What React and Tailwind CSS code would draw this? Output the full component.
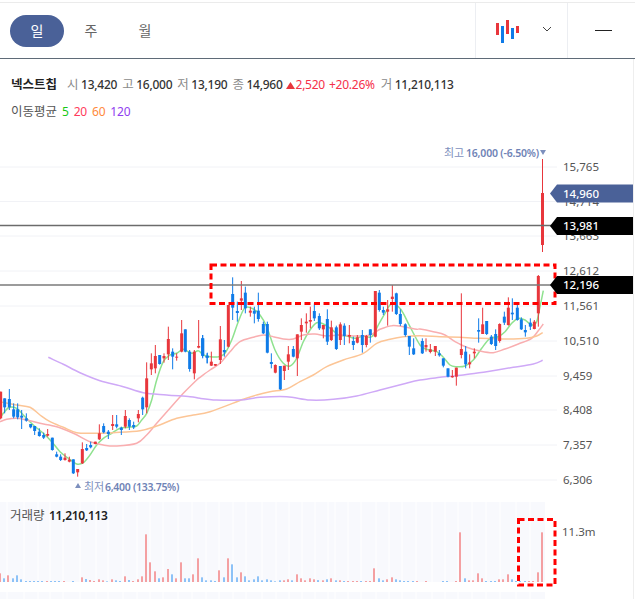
const FONT = "font-['Noto_Sans','Noto_Sans_CJK_KR',sans-serif]";

// candle rows are [x, bodyTop, bodyBottom, high, low, colour], read off in 3x crop coordinates
const toPage = (group) =>
  group.rows.map(([x, top, bottom, high, low, c]) => ({
    x: group.ox + x / 3,
    top: group.oy + top / 3,
    bottom: group.oy + bottom / 3,
    high: group.oy + high / 3,
    low: group.oy + low / 3,
    c,
  }));

const candleGroups = [
  {
    ox: 0,
    oy: 320,
    rows: [
      [2, 215, 295, 215, 298, 'r'], [14, 235, 262, 235, 280, 'b'], [28, 237, 262, 207, 270, 'b'],
      [41, 268, 290, 250, 295, 'b'], [53, 268, 292, 250, 298, 'b'], [65, 287, 293, 270, 327, 'b'],
      [79, 295, 302, 280, 305, 'b'], [92, 312, 322, 312, 325, 'b'], [104, 318, 333, 318, 345, 'b'],
      [118, 335, 348, 325, 350, 'b'], [131, 345, 353, 338, 357, 'b'], [143, 342, 347, 327, 350, 'r'],
      [157, 353, 390, 353, 392, 'b'], [170, 403, 410, 395, 412, 'b'], [182, 410, 420, 403, 423, 'b'],
      [195, 413, 420, 400, 422, 'r'], [208, 419, 425, 410, 427, 'r'], [220, 418, 460, 418, 462, 'b'],
      [233, 447, 457, 447, 470, 'r'], [247, 387, 430, 367, 432, 'r'], [260, 384, 391, 372, 393, 'b'],
      [272, 375, 382, 365, 385, 'b'], [286, 365, 372, 365, 373, 'r'], [298, 340, 358, 313, 360, 'r'],
      [311, 318, 337, 310, 340, 'b'], [325, 335, 342, 330, 357, 'b'], [338, 312, 318, 285, 330, 'r'],
      [350, 313, 320, 285, 325, 'b'], [364, 323, 330, 320, 345, 'b'], [376, 288, 320, 270, 325, 'r'],
      [388, 300, 320, 295, 330, 'b'], [401, 315, 322, 305, 327, 'b'], [415, 282, 295, 270, 307, 'r'],
      [428, 233, 268, 230, 285, 'b'], [440, 175, 262, 127, 280, 'r'], [454, 130, 148, 100, 165, 'r'],
      [466, 108, 145, 75, 160, 'r'], [479, 105, 132, 105, 134, 'b'], [492, 108, 115, 100, 128, 'r'],
      [505, 57, 103, 20, 120, 'r'], [518, 95, 110, 85, 148, 'b'], [530, 110, 113, 100, 122, 'r'],
      [545, 40, 95, 0, 97, 'r'], [556, 28, 95, 28, 97, 'b'], [569, 95, 147, 90, 155, 'b'],
      [583, 95, 160, 90, 178, 'r'], [596, 78, 83, 0, 85, 'r'], [608, 55, 108, 45, 115, 'b'],
      [622, 107, 113, 98, 130, 'b'],
    ],
  },
  {
    ox: 200,
    oy: 260,
    rows: [
      [8, 235, 285, 225, 292, 'b'], [21, 288, 293, 280, 310, 'b'], [34, 305, 317, 275, 318, 'r'],
      [46, 312, 317, 312, 318, 'r'], [61, 238, 300, 198, 312, 'r'], [73, 270, 277, 240, 290, 'b'],
      [85, 135, 260, 135, 262, 'r'], [98, 102, 143, 52, 180, 'b'], [112, 153, 159, 125, 185, 'b'],
      [124, 115, 122, 63, 150, 'r'], [136, 98, 145, 80, 160, 'b'], [151, 152, 158, 140, 170, 'r'],
      [163, 152, 161, 140, 190, 'b'], [175, 152, 177, 98, 185, 'b'], [190, 192, 220, 185, 222, 'b'],
      [202, 192, 278, 185, 280, 'b'], [214, 306, 312, 280, 325, 'b'], [226, 315, 338, 313, 340, 'r'],
      [241, 318, 388, 318, 390, 'b'], [253, 317, 333, 317, 360, 'r'], [265, 283, 305, 258, 330, 'r'],
      [280, 267, 290, 258, 292, 'b'], [292, 223, 295, 223, 348, 'r'], [304, 195, 215, 175, 240, 'r'],
      [319, 185, 190, 160, 218, 'r'], [331, 180, 185, 140, 205, 'r'], [343, 153, 175, 130, 183, 'b'],
      [358, 168, 205, 160, 210, 'b'], [370, 195, 208, 195, 235, 'r'], [382, 177, 245, 148, 255, 'b'],
      [394, 202, 240, 182, 243, 'r'], [409, 202, 267, 197, 270, 'b'], [421, 193, 240, 187, 255, 'r'],
      [433, 197, 228, 190, 255, 'b'], [448, 225, 230, 195, 250, 'r'], [460, 243, 255, 230, 270, 'b'],
      [472, 232, 248, 225, 250, 'r'], [487, 225, 255, 210, 278, 'b'], [499, 228, 255, 225, 262, 'r'],
      [511, 208, 225, 208, 248, 'b'], [526, 93, 230, 93, 232, 'r'], [538, 98, 150, 90, 155, 'b'],
      [550, 150, 158, 140, 165, 'b'], [563, 148, 155, 120, 197, 'r'], [577, 110, 117, 75, 155, 'r'],
      [589, 100, 162, 98, 165, 'b'], [601, 162, 192, 148, 198, 'b'], [616, 193, 225, 190, 230, 'b'],
      [628, 228, 260, 228, 285, 'b'], [641, 265, 283, 235, 285, 'b'],
    ],
  },
  {
    ox: 420,
    oy: 270,
    rows: [
      [7, 213, 250, 205, 252, 'b'], [18, 225, 232, 205, 245, 'r'], [31, 238, 246, 222, 250, 'r'],
      [46, 228, 245, 228, 258, 'r'], [58, 250, 256, 240, 260, 'b'], [70, 265, 287, 265, 292, 'b'],
      [84, 295, 320, 295, 322, 'b'], [97, 318, 322, 300, 323, 'r'], [109, 293, 320, 293, 347, 'r'],
      [124, 237, 255, 70, 265, 'r'], [137, 245, 283, 228, 295, 'b'], [149, 277, 283, 253, 295, 'r'],
      [163, 245, 250, 235, 265, 'r'], [176, 180, 185, 145, 218, 'b'], [188, 163, 192, 113, 192, 'r'],
      [200, 153, 192, 153, 195, 'b'], [214, 200, 222, 195, 225, 'b'], [227, 192, 228, 178, 240, 'b'],
      [239, 162, 213, 160, 218, 'r'], [253, 140, 158, 125, 165, 'b'], [265, 113, 165, 82, 167, 'r'],
      [277, 128, 133, 85, 150, 'b'], [292, 113, 150, 105, 152, 'b'], [304, 148, 178, 142, 180, 'b'],
      [316, 180, 187, 165, 200, 'b'], [331, 158, 170, 145, 180, 'b'], [343, 155, 177, 150, 178, 'r'],
      [355, 18, 130, 15, 170, 'r'],
    ],
  },
];

const candles = candleGroups.flatMap(toPage);

// Catmull-Rom through the read-off points, so the averages curve like the real chart
const smoothPath = (segments) => {
  const pts = segments.flatMap(([ox, oy, list]) => list.map(([x, y]) => [ox + x / 3, oy + y / 3]));
  let d = `M${pts[0][0].toFixed(1)} ${pts[0][1].toFixed(1)}`;
  for (let i = 0; i < pts.length - 1; i++) {
    const p0 = pts[i - 1] || pts[i];
    const p1 = pts[i];
    const p2 = pts[i + 1];
    const p3 = pts[i + 2] || p2;
    const c1 = [p1[0] + (p2[0] - p0[0]) / 6, p1[1] + (p2[1] - p0[1]) / 6];
    const c2 = [p2[0] - (p3[0] - p1[0]) / 6, p2[1] - (p3[1] - p1[1]) / 6];
    d += `C${c1[0].toFixed(1)} ${c1[1].toFixed(1)} ${c2[0].toFixed(1)} ${c2[1].toFixed(1)} ${p2[0].toFixed(1)} ${p2[1].toFixed(1)}`;
  }
  return d;
};

const maLines = [
  {
    color: '#8fe28f',
    d: smoothPath([
      [0, 320, [[0, 295], [10, 280], [28, 262], [50, 265], [70, 285], [100, 315], [130, 340], [155, 365], [180, 395], [205, 415], [230, 432], [250, 428], [270, 405], [290, 375], [310, 355], [335, 340], [360, 325], [385, 322], [410, 318], [425, 300], [440, 280], [455, 240], [470, 180], [490, 125], [510, 105], [530, 100], [550, 88], [575, 100], [595, 92], [610, 105]]],
      [200, 260, [[30, 290], [55, 290], [75, 280], [95, 240], [115, 185], [135, 143], [160, 147], [180, 165], [200, 200], [225, 270], [250, 310], [270, 318], [290, 295], [310, 245], [330, 210], [350, 188], [370, 192], [395, 208], [415, 225], [440, 228], [465, 235], [490, 228], [515, 230], [535, 195], [555, 160], [575, 130], [595, 140], [610, 160], [630, 200]]],
      [420, 270, [[0, 225], [20, 238], [50, 245], [70, 262], [90, 285], [110, 290], [135, 288], [160, 270], [185, 235], [210, 205], [235, 200], [255, 185], [275, 160], [295, 145], [315, 150], [335, 165], [350, 155], [360, 110], [370, 62]]],
    ]),
  },
  {
    color: '#f9aeb0',
    d: smoothPath([
      [0, 320, [[0, 305], [20, 298], [50, 295], [80, 300], [120, 310], [170, 320], [220, 340], [270, 365], [310, 375], [350, 378], [410, 370], [440, 345], [470, 310], [510, 265], [550, 220], [590, 180]]],
      [200, 260, [[0, 352], [30, 330], [60, 310], [90, 275], [120, 245], [160, 232], [190, 225], [220, 230], [250, 237], [280, 237], [310, 225], [345, 222], [380, 228], [420, 225], [470, 228], [510, 225], [540, 208], [575, 197], [610, 200], [650, 208]]],
      [420, 270, [[0, 177], [40, 185], [75, 195], [105, 215], [140, 232], [180, 243], [220, 248], [255, 237], [295, 222], [335, 205], [355, 182], [370, 162]]],
    ]),
  },
  {
    color: '#fcc596',
    d: smoothPath([
      [0, 320, [[0, 245], [50, 255], [90, 262], [120, 285], [150, 305], [190, 322], [230, 338], [280, 340], [340, 338], [420, 332], [470, 318], [530, 295], [580, 285], [630, 275]]],
      [200, 260, [[130, 418], [170, 405], [210, 395], [260, 387], [300, 365], [340, 345], [380, 320], [430, 300], [490, 280], [530, 250], [570, 238], [610, 230]]],
      [420, 270, [[0, 197], [60, 200], [120, 202], [180, 205], [260, 207], [320, 205], [350, 198], [368, 188]]],
    ]),
  },
  {
    color: '#cfa9f7',
    d: smoothPath([
      [0, 320, [[145, 112], [190, 133], [240, 158], [300, 182], [370, 200], [430, 218], [500, 225], [570, 230]]],
      [200, 260, [[0, 415], [50, 420], [120, 420], [180, 412], [260, 410], [330, 420], [400, 418], [470, 408], [540, 390], [610, 372]]],
      [420, 270, [[0, 330], [60, 322], [130, 315], [200, 305], [280, 292], [340, 282], [368, 271]]],
    ]),
  },
];

const volumeLeft = [
  [0, 235, 'r'], [12, 250, 'b'], [24, 241, 'r'], [39, 250, 'b'], [51, 241, 'b'], [63, 253, 'b'],
  [78, 258, 'b'], [90, 258, 'b'], [102, 258, 'b'], [114, 258, 'b'], [126, 258, 'b'], [141, 258, 'r'], [153, 258, 'b'], [165, 258, 'b'], [177, 258, 'b'], [192, 258, 'r'], [219, 258, 'b'],
  [246, 247, 'r'], [258, 252, 'b'], [270, 255, 'r'], [282, 258, 'r'], [297, 253, 'r'], [309, 256, 'r'], [321, 259, 'b'], [336, 253, 'r'], [348, 256, 'b'], [360, 258, 'b'],
  [375, 244, 'r'], [387, 255, 'b'], [399, 258, 'r'], [414, 253, 'r'], [426, 244, 'r'], [438, 118, 'r'], [450, 202, 'r'], [465, 229, 'r'], [477, 250, 'b'], [489, 247, 'r'], [504, 222, 'r'], [516, 238, 'b'], [528, 250, 'r'],
  [543, 202, 'r'], [555, 250, 'b'], [567, 250, 'b'], [579, 238, 'r'], [594, 190, 'r'], [606, 247, 'b'], [618, 256, 'b'], [632, 256, 'b'], [644, 258, 'b'], [657, 226, 'r'], [672, 247, 'b'], [684, 190, 'r'], [696, 208, 'b'],
  [711, 247, 'b'], [723, 232, 'r'], [735, 244, 'b'], [747, 256, 'b'], [762, 253, 'b'], [774, 244, 'b'], [786, 256, 'b'], [801, 253, 'b'], [813, 256, 'b'], [825, 259, 'b'], [840, 256, 'b'], [852, 256, 'r'], [864, 253, 'r'], [876, 256, 'b'],
  [891, 238, 'r'], [903, 250, 'r'], [915, 256, 'r'], [930, 250, 'r'], [942, 253, 'r'], [954, 256, 'b'],
];

const volumeRight = [
  [9, 256, 'b'], [24, 256, 'r'], [36, 253, 'b'], [48, 250, 'r'], [63, 256, 'b'], [75, 256, 'r'], [87, 258, 'b'], [100, 258, 'r'], [113, 258, 'r'], [125, 258, 'r'], [138, 258, 'b'], [152, 258, 'r'], [165, 258, 'r'], [177, 220, 'r'], [192, 250, 'b'], [204, 256, 'b'], [216, 253, 'r'], [231, 247, 'r'], [243, 253, 'b'], [255, 256, 'b'], [267, 258, 'b'], [280, 258, 'b'], [293, 258, 'b'], [307, 258, 'r'], [333, 258, 'r'], [385, 258, 'b'], [397, 258, 'b'], [423, 258, 'r'], [435, 112, 'r'], [450, 250, 'b'], [462, 256, 'r'], [474, 256, 'r'], [489, 235, 'r'], [501, 250, 'r'], [513, 258, 'b'], [528, 258, 'b'], [540, 258, 'b'], [552, 253, 'r'], [564, 253, 'r'], [579, 238, 'r'], [591, 253, 'b'], [603, 258, 'b'], [616, 258, 'b'], [629, 258, 'b'], [642, 258, 'r'], [655, 258, 'r'], [669, 232, 'r'], [681, 112, 'r'],
];

const volumes = [
  ...volumeLeft.map(([x, y, c]) => ({ x: Math.round(x / 3), y: 495 + y / 3, c })),
  ...volumeRight.map(([x, y, c]) => ({ x: Math.round(315 + x / 3), y: 495 + y / 3, c })),
];

const axis = [
  ['15,765', 167], ['14,714', 201.5], ['13,663', 236], ['12,612', 271], ['11,561', 306],
  ['10,510', 341], ['9,459', 376], ['8,408', 410], ['7,357', 445], ['6,306', 480],
];

const stripeGaps = [7, 24, 38, 50, 63, 80, 96, 108, 123, 137, 150, 163, 178, 192, 206, 219, 233, 246, 262, 276, 289, 302, 315, 328, 335, 348, 361, 376, 389, 402, 416, 432, 445, 458, 472, 486, 500, 516, 530];

function PriceTag({ y, label, fill }) {
  return (
    <g>
      <polygon points={`550,${y} 557,${y - 9} 633,${y - 9} 633,${y + 9} 557,${y + 9}`} fill={fill} />
      <text x="563" y={y + 4} className="fill-white text-[11.5px] font-medium">{label}</text>
    </g>
  );
}

function PriceChart() {
  return (
    <svg width="633" height="469" viewBox="0 130 633 469" className={`block ${FONT}`}>
      {axis.map(([label, y]) => (
        <g key={label}>
          <line x1="0" x2="557" y1={y} y2={y} stroke="#f1f2f6" />
          <text x="563" y={y + 4} className="fill-[#555555] text-[11.5px]">{label}</text>
        </g>
      ))}

      {/* volume panel */}
      <rect x="0" y="502" width="545" height="80" fill="#f8f9fd" />
      <rect x="0" y="592" width="545" height="7" fill="#f8f9fd" />
      {stripeGaps.map((x) => (
        <line key={x} x1={x} x2={x} y1="502" y2="599" stroke="#ffffff" />
      ))}
      <rect x="0" y="582" width="545" height="10" fill="#ffffff" />
      {volumes.map((v, i) => (
        <rect key={i} x={v.x - 1} y={v.y} width="2" height={582 - v.y} fill={v.c === 'r' ? '#f4a0a2' : '#8dc2f7'} />
      ))}

      {maLines.map((line) => (
        <path key={line.color} d={line.d} fill="none" stroke={line.color} strokeWidth="1.5" />
      ))}

      {candles.map((c, i) => {
        const color = c.c === 'r' ? '#e8363c' : '#0f7be8';
        return (
          <g key={i}>
            <line x1={c.x} x2={c.x} y1={c.high} y2={c.low} stroke={color} />
            <rect x={c.x - 1.5} y={c.top} width="3" height={c.bottom - c.top} fill={color} />
          </g>
        );
      })}
      <line x1="542.5" x2="542.5" y1="159" y2="252" stroke="#e8363c" />
      <rect x="541" y="193" width="3" height="52" fill="#e8363c" />

      <line x1="0" x2="552" y1="225.5" y2="225.5" stroke="#6b6b6b" strokeWidth="1.4" />
      <line x1="0" x2="552" y1="285" y2="285" stroke="#7a7a7a" strokeWidth="1.6" />

      <rect x="211" y="265" width="344" height="38.5" fill="none" stroke="#ff0000" strokeWidth="3" strokeDasharray="6 3.5" />
      <rect x="518.5" y="519.5" width="36.5" height="65.5" fill="none" stroke="#ff0000" strokeWidth="3" strokeDasharray="6 3.5" />

      <PriceTag y={193.5} label="14,960" fill="#4a6198" />
      <PriceTag y={226} label="13,981" fill="#000000" />
      <PriceTag y={285} label="12,196" fill="#000000" />

      <text x="444" y="157" className="fill-[#7d8fbd] text-[11px]">최고</text>
      <text x="466" y="157" className="fill-[#6f83b6] text-[10.5px] font-semibold tracking-[-0.2px]">16,000 (-6.50%)</text>
      <polygon points="540,150 546,150 543,155" fill="#7d8fbd" />

      <polygon points="75,488 81,488 78,483" fill="#7d8fbd" />
      <text x="84" y="491" className="fill-[#7d8fbd] text-[11px]">최저</text>
      <text x="105" y="491" className="fill-[#6f83b6] text-[10.5px] font-semibold tracking-[-0.3px]">6,400 (133.75%)</text>

      <text x="10" y="520" className="fill-[#555555] text-[12.5px]">거래량</text>
      <text x="49" y="520" className="fill-[#222222] text-[12px] font-semibold tracking-[-0.3px]">11,210,113</text>
      <text x="562" y="536" className="fill-[#555555] text-[11.5px]">11.3m</text>
    </svg>
  );
}

function Quote({ label, value }) {
  return (
    <span className="flex items-center gap-[2.5px]">
      <span className="text-[12.5px] text-[#8a8a8a]">{label}</span>
      <span className="font-medium tracking-[-0.25px] text-[#333333]">{value}</span>
    </span>
  );
}

export default function App() {
  return (
    <div className={`w-[635px] h-[599px] overflow-hidden bg-white pt-[2px] ${FONT}`}>
      <div className="flex h-[57px] border-y border-t-[#ebebeb] border-b-[#5f6b78] box-border">
        <div className="flex flex-1 items-center pl-[10px] text-[14px] text-[#666666]">
          <button className="w-[54px] h-[32px] rounded-full bg-[#4a6198] text-white">일</button>
          <button className="w-[54px] h-[32px]">주</button>
          <button className="w-[54px] h-[32px]">월</button>
        </div>
        <div className="flex items-center w-[93px] h-full border-x border-[#eceef2]">
          <svg width="24" height="24" viewBox="0 0 24 24" className="ml-[20px]">
            <rect x="0" y="4" width="3" height="12" fill="#e8363c" />
            <rect x="5" y="7" width="3" height="17" fill="#0f7be8" />
            <rect x="10" y="1" width="3" height="14" fill="#e8363c" />
            <rect x="15" y="9" width="3" height="11" fill="#0f7be8" />
            <rect x="20" y="7" width="3" height="7" fill="#e8363c" />
          </svg>
          <svg width="10" height="6" viewBox="0 0 10 6" className="ml-[22px] -mt-[4px]">
            <path d="M1 1l4 4 4-4" fill="none" stroke="#444444" strokeWidth="1" />
          </svg>
        </div>
        <div className="flex w-[67px] items-center pl-[27px]">
          <div className="w-[17px] h-[1.5px] bg-[#222222]" />
        </div>
      </div>

      <div className="w-[634px] h-[540px] border-r border-[#eeeeee]">
        <div className="pl-[11px] pt-[17px] text-[12px] leading-[18px]">
          <div className="flex items-center">
            <span className="text-[12.5px] font-bold text-[#222222] mr-[10px]">넥스트칩</span>
            <div className="flex items-center gap-[5px]">
              <Quote label="시" value="13,420" />
              <Quote label="고" value="16,000" />
              <Quote label="저" value="13,190" />
              <Quote label="종" value="14,960" />
            </div>
            <span className="flex items-center ml-[3px] tracking-[-0.25px] text-[#f5304a]">
              <svg width="9" height="7" viewBox="0 0 9 7" className="mr-[1px]"><polygon points="4.5,0 9,7 0,7" fill="#e8363c" /></svg>
              <span>2,520</span>
              <span className="ml-[4px]">+20.26%</span>
            </span>
            <span className="ml-[6px]"><Quote label="거" value="11,210,113" /></span>
          </div>
          <div className="flex items-center gap-[5px] mt-[9px] tracking-[-0.2px] text-[#555555]">
            <span className="text-[12.5px] tracking-normal">이동평균</span>
            <span className="text-[#16c816]">5</span>
            <span className="text-[#ff3b5c]">20</span>
            <span className="text-[#ff8a3c]">60</span>
            <span className="text-[#9040f0]">120</span>
          </div>
        </div>
        <div className="mt-[9px]">
          <PriceChart />
        </div>
      </div>
    </div>
  );
}
